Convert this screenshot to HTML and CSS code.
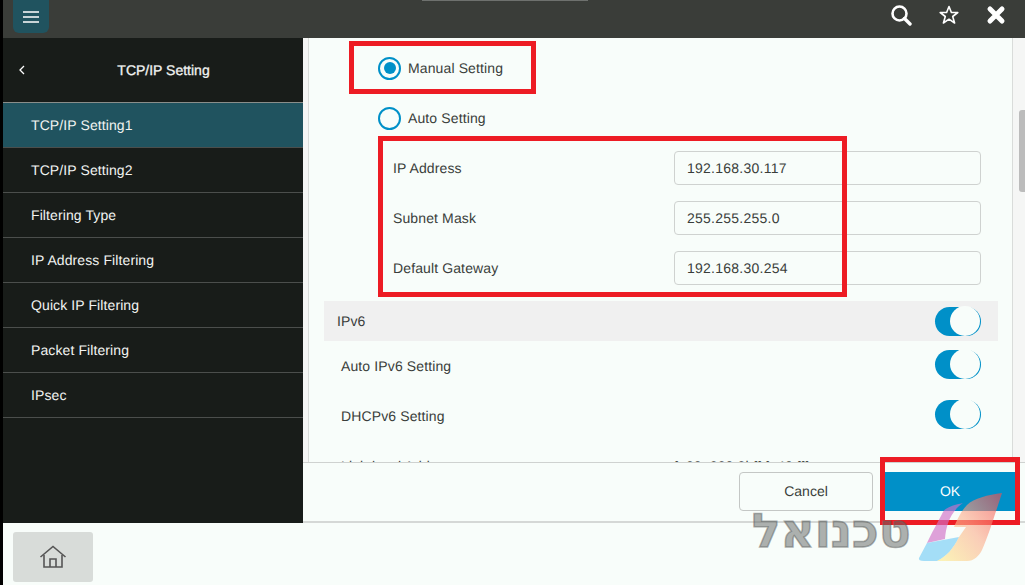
FILE: index.html
```html
<!DOCTYPE html>
<html>
  <head>
    <title>TCP/IP Setting</title>
    <meta charset="UTF-8">
    <link rel="stylesheet" href="styles.css">
  </head>
  <body>
    <div class="screen">
      <div class="top-bar">
        <div class="menu-button">
          <svg width="18" height="14" viewBox="0 0 18 14"><path d="M1 2h16M1 7h16M1 12h16" stroke="#fff" stroke-width="1.6"/></svg>
        </div>
        <div class="notch"></div>
        <div class="top-icons">
          <svg width="22" height="22" viewBox="0 0 22 22"><circle cx="9.5" cy="9.500" r="7" fill="none" stroke="#fff" stroke-width="2.6"/><path d="M14.500 14.500l5.500 5.500" stroke="#fff" stroke-width="3.400" stroke-linecap="round"/></svg>
          <svg width="22" height="22" viewBox="0 0 22 22"><path d="M11 2.500l2.400 6h6.400l-5.100 4 1.900 6.500-5.600-3.800-5.600 3.800 1.900-6.500-5.100-4h6.400z" fill="none" stroke="#fff" stroke-width="1.600" stroke-linejoin="round"/></svg>
          <svg width="20" height="20" viewBox="0 0 20 20"><path d="M4 4l12 12M16 4L4 16" stroke="#fff" stroke-width="5" stroke-linecap="round"/></svg>
        </div>
      </div>

      <div class="middle">
        <div class="side-bar">
          <div class="side-head">
            <svg class="back" width="8" height="12" viewBox="0 0 8 12"><path d="M6 2L2 6l4 4" fill="none" stroke="#fff" stroke-width="1.300"/></svg>
            <span>TCP/IP Setting</span>
          </div>
          <div class="side-item active">TCP/IP Setting1</div>
          <div class="side-item">TCP/IP Setting2</div>
          <div class="side-item">Filtering Type</div>
          <div class="side-item">IP Address Filtering</div>
          <div class="side-item">Quick IP Filtering</div>
          <div class="side-item">Packet Filtering</div>
          <div class="side-item">IPsec</div>
        </div>

        <div class="main">
          <div class="scroll-area">
            <div class="panel">
              <div class="radio-row"><i class="radio checked"></i>Manual Setting</div>
              <div class="radio-row"><i class="radio"></i>Auto Setting</div>
              <div class="field-row"><span>IP Address</span><div class="input">192.168.30.117</div></div>
              <div class="field-row"><span>Subnet Mask</span><div class="input">255.255.255.0</div></div>
              <div class="field-row"><span>Default Gateway</span><div class="input">192.168.30.254</div></div>
              <div class="section-row"><span>IPv6</span><i class="toggle"></i></div>
              <div class="switch-row"><span>Auto IPv6 Setting</span><i class="toggle"></i></div>
              <div class="switch-row"><span>DHCPv6 Setting</span><i class="toggle"></i></div>
              <div class="switch-row"><span>Link-local Address</span><span class="link-value">fe80::230:3bff:fe40:fff</span></div>
            </div>
            <div class="scroll-thumb"></div>
          </div>
          <div class="footer">
            <div class="btn cancel">Cancel</div>
            <div class="btn ok">OK</div>
          </div>
        </div>
      </div>

      <div class="bottom-bar">
        <div class="home-button">
          <svg width="28" height="24" viewBox="0 0 28 24"><path d="M1.500 12L14 1.500 26.500 12" fill="none" stroke="#555" stroke-width="1.600"/><path d="M5 10v12h18V10" fill="none" stroke="#555" stroke-width="1.600"/><path d="M11 22v-8h6v8" fill="none" stroke="#555" stroke-width="1.600"/></svg>
        </div>
      </div>

      <div class="mark mark-manual"></div>
      <div class="mark mark-fields"></div>
      <div class="mark mark-ok"></div>

      <div class="watermark">טכנואל</div>
      <svg class="water-logo" width="90" height="75" viewBox="0 0 90 75">
        <defs>
          <linearGradient id="leafRight" x1="20" y1="60" x2="86" y2="10" gradientUnits="userSpaceOnUse">
            <stop offset="0" stop-color="#fdea8e"/>
            <stop offset="0.5" stop-color="#fbb08f"/>
            <stop offset="1" stop-color="#f5504f"/>
          </linearGradient>
        </defs>
        <path d="M47 13C38 15 30 17 27 22 23 30 15 44 11 53L29 49C30 36 34 22 47 13Z" fill="#cf70c8" opacity="0.65"/>
        <path d="M11 53L43 47C38 58 30 67 21 71H8Q2 71 3 68Z" fill="#8fd6f6" opacity="0.8"/>
        <path d="M86 3C72 5 58 8 51 15 45 21 41 30 38 37H50L43 47C38 58 30 67 21 71H51C58 71 63 66 66 60 72 47 78 27 86 3Z" fill="url(#leafRight)" opacity="0.62"/>
      </svg>
    </div>
  </body>
</html>
```

FILE: styles.css
```css
html, body {
  width: 100%;
  height: 100%;
  padding: 0px;
  margin: 0px;
  overflow: hidden;
}

body {
  font-family: "Liberation Sans", Arial, sans-serif;
  font-size: 14px;
  color: #3a3d3b;
  background-color: #000;
  text-rendering: geometricPrecision;
}

.screen {
  position: relative;
  display: flex;
  flex-direction: column;
  width: 1022px;
  height: 585px;
  margin-left: 3px;
  background-color: #f8fdfa;
}

.top-bar {
  position: relative;
  display: flex;
  align-items: flex-start;
  justify-content: space-between;
  height: 38px;
  padding-left: 10px;
  background-color: #3a3d39;
}

.menu-button {
  display: flex;
  align-items: center;
  justify-content: center;
  width: 36px;
  height: 33px;
  border-radius: 0 0 6px 6px;
  background-color: #20535f;
}

.notch {
  position: absolute;
  left: 419px;
  top: 0;
  width: 166px;
  height: 1px;
  background-color: #6e716e;
}

.top-icons {
  display: flex;
  align-items: center;
  gap: 26px;
  height: 30px;
  padding-right: 19px;
}

.middle {
  display: flex;
  height: 485px;
}

.side-bar {
  width: 300px;
  flex-shrink: 0;
  background-color: #181c19;
  color: #f1f3f1;
}

.side-head {
  position: relative;
  display: flex;
  align-items: center;
  justify-content: center;
  height: 64px;
  padding-left: 21px;
  border-bottom: 1px solid #8a8e8b;
  -webkit-text-stroke: 0.3px #f1f3f1;
}

.back {
  position: absolute;
  left: 15px;
  top: 26px;
}

.side-item {
  display: flex;
  align-items: center;
  box-sizing: border-box;
  height: 45px;
  padding-left: 28px;
  border-bottom: 1px solid #4b4e4c;
  letter-spacing: 0.1px;
}

.side-item.active {
  background-color: #20535f;
}

.main {
  flex: 1;
  display: flex;
  flex-direction: column;
  min-width: 0;
  border-bottom: 2px solid #d5d8d6;
}

.scroll-area {
  position: relative;
  flex: 1;
  overflow: hidden;
  padding-left: 5px;
  background-color: #f5f6f5;
}

.panel {
  box-sizing: border-box;
  width: 705px;
  height: 100%;
  padding: 5px 0 0 15px;
  border-left: 1px solid #d9dcda;
  border-right: 1px solid #d9dcda;
  background-color: #f8fdfa;
  letter-spacing: 0.12px;
}

.scroll-thumb {
  position: absolute;
  right: 0;
  top: 72px;
  width: 6px;
  height: 82px;
  border-radius: 3px 0 0 3px;
  background-color: #bcbcbc;
}

.radio-row {
  display: flex;
  align-items: center;
  gap: 7px;
  height: 50px;
  padding-left: 54px;
}

.radio {
  position: relative;
  box-sizing: border-box;
  width: 23px;
  height: 23px;
  border: 2px solid #0090c8;
  border-radius: 50%;
  background-color: #f8fdfa;
}

.radio.checked:after {
  content: '';
  position: absolute;
  left: 3.5px;
  top: 3.5px;
  width: 12px;
  height: 12px;
  border-radius: 50%;
  background-color: #0090c8;
}

.field-row {
  display: flex;
  align-items: center;
  justify-content: space-between;
  box-sizing: border-box;
  height: 50px;
  padding: 0 31px 0 69px;
}

.input {
  display: flex;
  align-items: center;
  box-sizing: border-box;
  width: 307px;
  height: 34px;
  padding-left: 12px;
  border: 1px solid #cfd2d0;
  border-radius: 4px;
  letter-spacing: 0.25px;
}

.section-row {
  display: flex;
  align-items: center;
  justify-content: space-between;
  box-sizing: border-box;
  width: 674px;
  height: 40px;
  margin-top: 8px;
  padding: 0 17px 0 13px;
  background-color: #f0f0f0;
}

.switch-row {
  position: relative;
  display: flex;
  align-items: center;
  justify-content: space-between;
  box-sizing: border-box;
  height: 50px;
  padding: 0 31px 0 17px;
}

.link-value {
  position: absolute;
  left: 350px;
}

.toggle {
  position: relative;
  width: 46px;
  height: 29px;
  border-radius: 15px;
  background-color: #0090c8;
}

.switch-row .toggle {
  margin-top: -4px;
}

.toggle:after {
  content: '';
  position: absolute;
  right: 1px;
  top: -1px;
  width: 30px;
  height: 30px;
  border-radius: 50%;
  background-color: #f8fdfa;
}

.footer {
  display: flex;
  align-items: center;
  justify-content: flex-end;
  gap: 12px;
  flex-shrink: 0;
  box-sizing: border-box;
  height: 59px;
  padding: 0 10px 2px 0;
  border-top: 1px solid #cfd2d0;
  background-color: #f8fdfa;
}

.btn {
  display: flex;
  align-items: center;
  justify-content: center;
  box-sizing: border-box;
  height: 39px;
}

.cancel {
  width: 134px;
  border: 1px solid #c4c7c5;
  border-radius: 4px;
}

.ok {
  width: 130px;
  background-color: #0090c8;
  color: #fff;
}

.bottom-bar {
  flex: 1;
  padding: 9px 0 0 10px;
}

.home-button {
  display: flex;
  align-items: center;
  justify-content: center;
  width: 80px;
  height: 50px;
  border-radius: 3px;
  background-color: #d8dcd9;
}

/* red marks drawn on top of the screenshot */
.mark {
  position: absolute;
  box-sizing: border-box;
  border: 5px solid #ed1c24;
}

.mark-manual {
  left: 346px;
  top: 41px;
  width: 187px;
  height: 53px;
}

.mark-fields {
  left: 375px;
  top: 136px;
  width: 469px;
  height: 161px;
}

.mark-ok {
  left: 877px;
  top: 457px;
  width: 140px;
  height: 68px;
}

.watermark {
  position: absolute;
  left: 749px;
  top: 504px;
  font-family: "DejaVu Sans", sans-serif;
  font-size: 47px;
  font-weight: bold;
  line-height: 56px;
  color: rgba(96, 100, 98, 0.52);
  -webkit-text-stroke: 1.5px rgba(96, 100, 98, 0.52);
  direction: rtl;
}

.water-logo {
  position: absolute;
  left: 913px;
  top: 490px;
}
```
